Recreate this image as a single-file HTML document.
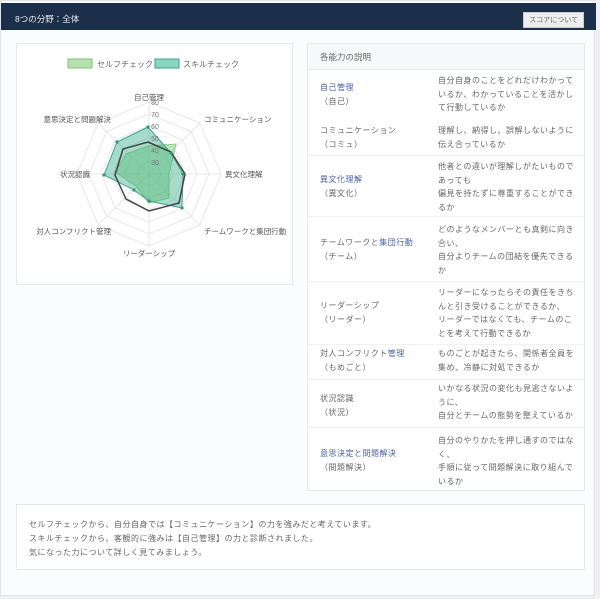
<!DOCTYPE html>
<html><head><meta charset="utf-8"><style>
*{margin:0;padding:0;box-sizing:border-box}
body{width:600px;height:599px;background:#eef0f3;font-family:"Liberation Sans","Noto Sans CJK JP",sans-serif;position:relative;overflow:hidden;color:#555}
.wrap{position:absolute;left:0;top:0;width:595px;height:596px;background:#fbfcfd;border:1px solid #dfe3e8}
.hdr{position:absolute;left:0;top:2px;width:595px;height:27px;background:#1c2f4a;color:#e8ecf2;font-size:8.5px;padding:10px 0 0 14px}
.btn{position:absolute;right:12px;top:9px;background:#eee;color:#666;font-size:7px;padding:2px 5px;border:1px solid #ccc}
.card{position:absolute;background:#fff;border:1px solid #e6e8ec}
.t{position:absolute;font-size:8px;line-height:13.5px;color:#666;letter-spacing:.5px}
.l{position:absolute;left:12px;font-size:8px;line-height:14px;color:#666;letter-spacing:.5px}
.b{color:#4a5fa8}
.sep{position:absolute;left:0;right:0;height:1px;background:#f0f1f3}
</style></head><body>
<div class="wrap">
<div class="hdr">8つの分野：全体<span class="btn">スコアについて</span></div>
<div class="card" style="left:15px;top:42px;width:277px;height:242px">
<svg width="277" height="242" style="position:absolute;left:-1px;top:-1px" font-family="Liberation Sans, Noto Sans CJK JP, sans-serif">
<rect x="52" y="16" width="24" height="9" fill="#b5e0b0" stroke="#7cc67a"/>
<text x="81" y="24" font-size="8" fill="#666">セルフチェック</text>
<rect x="139" y="16" width="24" height="9" fill="#8fd3c1" stroke="#3aa48a"/>
<text x="167" y="24" font-size="8" fill="#666">スキルチェック</text>
<g transform="translate(133,131)" fill="none" stroke="#e2e2e2" stroke-width="0.8">
<polygon points="0,-72 50.9,-50.9 72,0 50.9,50.9 0,72 -50.9,50.9 -72,0 -50.9,-50.9"/>
<polygon points="0,-60 42.4,-42.4 60,0 42.4,42.4 0,60 -42.4,42.4 -60,0 -42.4,-42.4"/>
<polygon points="0,-48 33.9,-33.9 48,0 33.9,33.9 0,48 -33.9,33.9 -48,0 -33.9,-33.9"/>
<polygon points="0,-36 25.5,-25.5 36,0 25.5,25.5 0,36 -25.5,25.5 -36,0 -25.5,-25.5"/>
<polygon points="0,-24 17,-17 24,0 17,17 0,24 -17,17 -24,0 -17,-17"/>
<polygon points="0,-12 8.5,-8.5 12,0 8.5,8.5 0,12 -8.5,8.5 -12,0 -8.5,-8.5"/>
<path d="M0,0L0,-72M0,0L50.9,-50.9M0,0L72,0M0,0L50.9,50.9M0,0L0,72M0,0L-50.9,50.9M0,0L-72,0M0,0L-50.9,-50.9"/>
</g>
<polygon points="132,103 160,101 153,131 153,155 133,160 120,143 99,129 110,111" fill="rgba(120,200,110,0.45)" stroke="#8ccd84" stroke-width="1"/>
<polygon points="132,84 155,110 167,131 166,165 133,158 118,147 88,132 101,99" fill="rgba(60,175,140,0.45)" stroke="#3aa48a" stroke-width="1"/>
<polygon points="132,99 155,109 169,131 163,160 133,168 110,156 99,132 107,106" fill="none" stroke="#444" stroke-width="1.5"/>
<g fill="#2e9a6e"><circle cx="132" cy="84" r="1.6"/><circle cx="155" cy="110" r="1.6"/><circle cx="167" cy="131" r="1.6"/><circle cx="166" cy="165" r="1.6"/><circle cx="133" cy="158" r="1.6"/><circle cx="118" cy="147" r="1.6"/><circle cx="88" cy="132" r="1.6"/><circle cx="101" cy="99" r="1.6"/></g>
<g font-size="7" fill="#777" text-anchor="middle"><text x="139" y="62">80</text><text x="139" y="74">70</text><text x="139" y="86">60</text><text x="139" y="98">50</text><text x="139" y="110">40</text><text x="139" y="122">30</text></g>
<g font-size="7.5" fill="#555"><text x="133" y="57" text-anchor="middle">自己管理</text><text x="188" y="79">コミュニケーション</text><text x="209" y="134">異文化理解</text><text x="188" y="191">チームワークと集団行動</text><text x="133" y="213" text-anchor="middle">リーダーシップ</text><text x="95" y="191" text-anchor="end">対人コンフリクト管理</text><text x="74" y="134" text-anchor="end">状況認識</text><text x="95" y="79" text-anchor="end">意思決定と問題解決</text></g>
</svg></div>
<div class="card" style="left:306px;top:42px;width:278px;height:448px">
<div style="height:26px;background:#f7f8f9;border-bottom:1px solid #e6e8ec;font-size:8.5px;color:#666;padding:7px 0 0 12px">各能力の説明</div>
<div class="sep" style="top:111px"></div><div class="sep" style="top:172px"></div><div class="sep" style="top:237px"></div><div class="sep" style="top:300px"></div><div class="sep" style="top:335px"></div><div class="sep" style="top:383px"></div>
<div class="l" style="top:37px"><span class="b">自己管理</span><br>（自己）</div>
<div class="t" style="left:130px;top:30px">自分自身のことをどれだけわかって<br>いるか、わかっていることを活かし<br>て行動しているか</div>
<div class="l" style="top:80px">コミュニケーション<br>（コミュ）</div>
<div class="t" style="left:130px;top:80px">理解し、納得し、誤解しないように<br>伝え合っているか</div>
<div class="l" style="top:129px"><span class="b">異文化理解</span><br>（異文化）</div>
<div class="t" style="left:130px;top:116px">他者との違いが理解しがたいもので<br>あっても<br>偏見を持たずに尊重することができ<br>るか</div>
<div class="l" style="top:192px">チームワークと<span class="b">集団行動</span><br>（チーム）</div>
<div class="t" style="left:130px;top:179px">どのようなメンバーとも真剣に向き<br>合い、<br>自分よりチームの団結を優先できる<br>か</div>
<div class="l" style="top:255px">リーダーシップ<br>（リーダー）</div>
<div class="t" style="left:130px;top:242px">リーダーになったらその責任をきち<br>んと引き受けることができるか、<br>リーダーではなくても、チームのこ<br>とを考えて行動できるか</div>
<div class="l" style="top:303px">対人コンフリクト<span class="b">管理</span><br>（もめごと）</div>
<div class="t" style="left:130px;top:303px">ものごとが起きたら、関係者全員を<br>集め、冷静に対処できるか</div>
<div class="l" style="top:348px">状況認識<br>（状況）</div>
<div class="t" style="left:130px;top:338px">いかなる状況の変化も見逃さないよ<br>うに、<br>自分とチームの態勢を整えているか</div>
<div class="l" style="top:403px"><span class="b">意思決定と問題解決</span><br>（問題解決）</div>
<div class="t" style="left:130px;top:390px">自分のやりかたを押し通すのではな<br>く、<br>手順に従って問題解決に取り組んで<br>いるか</div>
</div>
<div class="card" style="left:15px;top:503px;width:569px;height:66px">
<div class="t" style="left:12px;top:13px;line-height:14px">セルフチェックから、自分自身では【コミュニケーション】の力を強みだと考えています。<br>スキルチェックから、客観的に強みは【自己管理】の力と診断されました。<br>気になった力について詳しく見てみましょう。</div>
</div>
</div>
</body></html>
